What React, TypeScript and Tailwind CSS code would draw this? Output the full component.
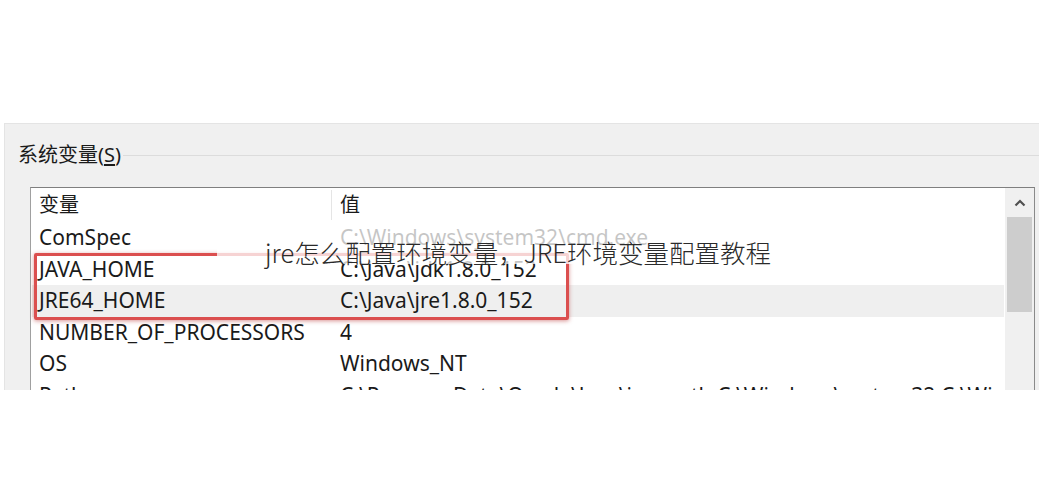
import React from "react";

const rows: { name: string; value: string; hl?: boolean }[] = [
  { name: "ComSpec", value: "C:\\Windows\\system32\\cmd.exe" },
  { name: "JAVA_HOME", value: "C:\\Java\\jdk1.8.0_152" },
  { name: "JRE64_HOME", value: "C:\\Java\\jre1.8.0_152", hl: true },
  { name: "NUMBER_OF_PROCESSORS", value: "4" },
  { name: "OS", value: "Windows_NT" },
  { name: "Path", value: "C:\\ProgramData\\Oracle\\Java\\javapath;C:\\Windows\\system32;C:\\Windows;C:\\Windows\\System32\\Wbem" },
];

export default function App() {
  return (
    <div
      className="relative w-[1039px] h-[490px] bg-white overflow-hidden text-[#1a1a1a]"
      style={{ fontFamily: '"Noto Sans", "Noto Sans CJK SC", sans-serif' }}
    >
      <div className="h-[123px]" />
      <div className="ml-[4px] h-[267px] bg-[#f0f0f0] border-l border-t border-[#e4e4e4] overflow-hidden">
        <div className="mt-[17px] flex items-center h-[28px]">
          <span className="ml-[13px] text-[20px] leading-[28px] whitespace-nowrap">
            系统变量(<span className="underline underline-offset-2">S</span>)
          </span>
          <div className="flex-1 h-px bg-[#dcdcdc] ml-[2px]" />
        </div>
        <div className="mt-[18px] ml-[25px] mr-[4px] border border-t-[#7f7f7f] border-l-[#a0a0a0] border-r-[#8a8a8a] border-b-[#a0a0a0] bg-white flex h-[300px]">
          <div className="flex-1 flex flex-col min-w-0">
            <div className="h-[34px] flex items-center text-[20px] shrink-0">
              <div className="w-[300px] pl-[8px] shrink-0">变量</div>
              <div className="w-px h-[30px] bg-[#e5e5e5]" />
              <div className="pl-[8px]">值</div>
            </div>
            {rows.map((r) => (
              <div
                key={r.name}
                className={`h-[31.5px] shrink-0 flex items-center text-[21px] whitespace-nowrap mr-[1px] ml-[1px] ${r.hl ? "bg-[#efefef]" : ""}`}
              >
                <div className="w-[299px] pl-[7px] shrink-0">{r.name}</div>
                <div className="pl-[9px] overflow-hidden">{r.value}</div>
              </div>
            ))}
          </div>
          <div className="w-[29px] shrink-0 bg-[#f0f0f0] flex flex-col">
            <div className="h-[29px] flex items-center justify-center">
              <svg width="12" height="8" viewBox="0 0 12 8">
                <polyline points="1.5,6.5 6,2 10.5,6.5" fill="none" stroke="#505050" strokeWidth="2.2" />
              </svg>
            </div>
            <div className="mx-[2px] h-[95px] bg-[#cdcdcd]" />
          </div>
        </div>
      </div>

      {/* red highlight box */}
      <div className="absolute left-[34px] top-[253px] w-[535px] h-[67px] border-[3px] border-[#db4f4f] rounded-[2px] shadow-[0_1px_4px_rgba(180,40,40,0.5)]" />

      {/* watermark overlay */}
      <div className="absolute left-[217px] top-[229px] w-[602px] h-[35px] bg-white/75" />
      <div
        className="absolute left-[265px] top-[233px] text-[25.5px] leading-[37px] font-light text-[#2a2a2a] whitespace-nowrap"
        style={{ fontFamily: '"Noto Sans CJK SC", "Noto Sans", sans-serif' }}
      >
        jre怎么配置环境变量，JRE环境变量配置教程
      </div>
    </div>
  );
}
